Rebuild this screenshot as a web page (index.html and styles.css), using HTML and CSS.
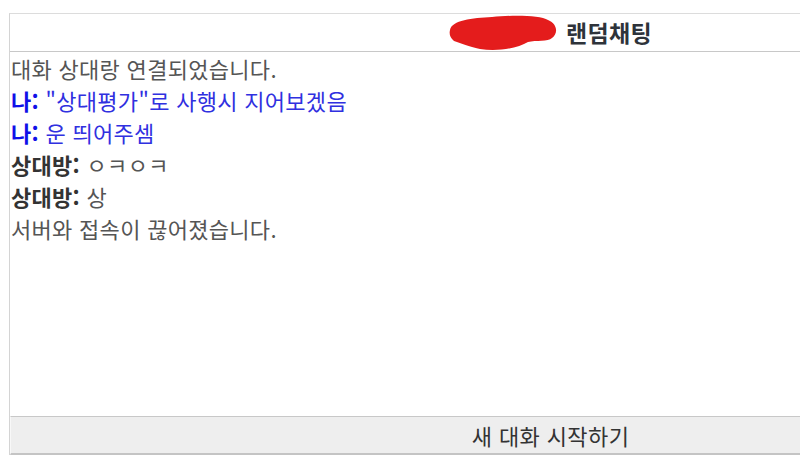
FILE: index.html
```html
<!DOCTYPE html>
<html lang="ko">
<head>
    <meta charset="UTF-8">
    <meta name="viewport" content="width=device-width, initial-scale=1.0">
    <title>랜덤채팅</title>
    <link rel="stylesheet" href="styles.css">
</head>
<body>

    <div class="chat">
        <!-- 상단 제목 -->
        <div class="chat-header">
            <span class="site-name">
                <svg class="mark" width="112" height="38" viewBox="0 0 112 38">
                    <path d="M2 16 C4 6 24 4 44 3 C64 1 92 1 100 6 C110 10 110 20 104 24 C100 28 88 26 80 28 C70 34 50 38 32 35 C20 32 14 30 6 27 C2 24 1 20 2 16 Z" fill="#e41c1c"/>
                </svg>
            </span>
            <span class="title">랜덤채팅</span>
        </div>

        <!-- 대화 내용 -->
        <div class="chat-log" id="log">
            <div class="msg system">대화 상대랑 연결되었습니다.</div>
            <div class="msg mine"><b>나:</b> "상대평가"로 사행시 지어보겠음</div>
            <div class="msg mine"><b>나:</b> 운 띄어주셈</div>
            <div class="msg other"><b>상대방:</b> ㅇㅋㅇㅋ</div>
            <div class="msg other"><b>상대방:</b> 상</div>
            <div class="msg system">서버와 접속이 끊어졌습니다.</div>
        </div>

        <button class="new-chat" onclick="newChat()">새 대화 시작하기</button>
    </div>

    <script>
        function newChat() {
            // 대화창 비우고 새로 연결
            document.getElementById("log").innerHTML =
                '<div class="msg system">상대방을 찾는 중입니다...</div>';
        }
    </script>

</body>
</html>
```

FILE: styles.css
```css
body {
    font-family: "Noto Sans CJK KR", "Noto Sans", sans-serif;
    background-color: white;
    margin: 0;
    padding: 13px 0 0 9px;
    overflow: hidden;
}

.chat {
    width: 1080px;
    border-left: 1px solid #d4d4d4;
    border-top: 1px solid #dcdcdc;
}

.chat-header {
    height: 37px;
    border-bottom: 1px solid #c8c8c8;
    display: flex;
    justify-content: center;
    align-items: center;
}

.site-name {
    display: flex;
    align-items: center;
    margin-right: 6px;
}

.title {
    font-size: 23px;
    font-weight: bold;
    letter-spacing: 0.3px;
    color: #2e333a;
    line-height: 1;
}

.chat-log {
    height: 364px;
    padding: 0 0 0 1px;
    overflow-y: auto;
}

.msg {
    font-size: 22px;
    letter-spacing: 0.3px;
    line-height: 32px;
    color: #555;
}

.msg b {
    font-weight: bold;
}

.mine {
    color: #3030e0;
}

.mine b {
    color: #1010e8;
}

.other b {
    color: #333;
}

.new-chat {
    display: block;
    width: 100%;
    height: 39px;
    margin: 0;
    padding: 0;
    background-color: #eeeeee;
    border: none;
    border-top: 1px solid #c8c8c8;
    border-bottom: 2px solid #c4c4c4;
    border-left: 1px solid #f8f8f8;
    font-family: "Noto Sans CJK KR", "Noto Sans", sans-serif;
    font-size: 22px;
    letter-spacing: 0.4px;
    color: #333;
    cursor: pointer;
}

.new-chat:hover {
    background-color: #e4e4e4;
}
```
